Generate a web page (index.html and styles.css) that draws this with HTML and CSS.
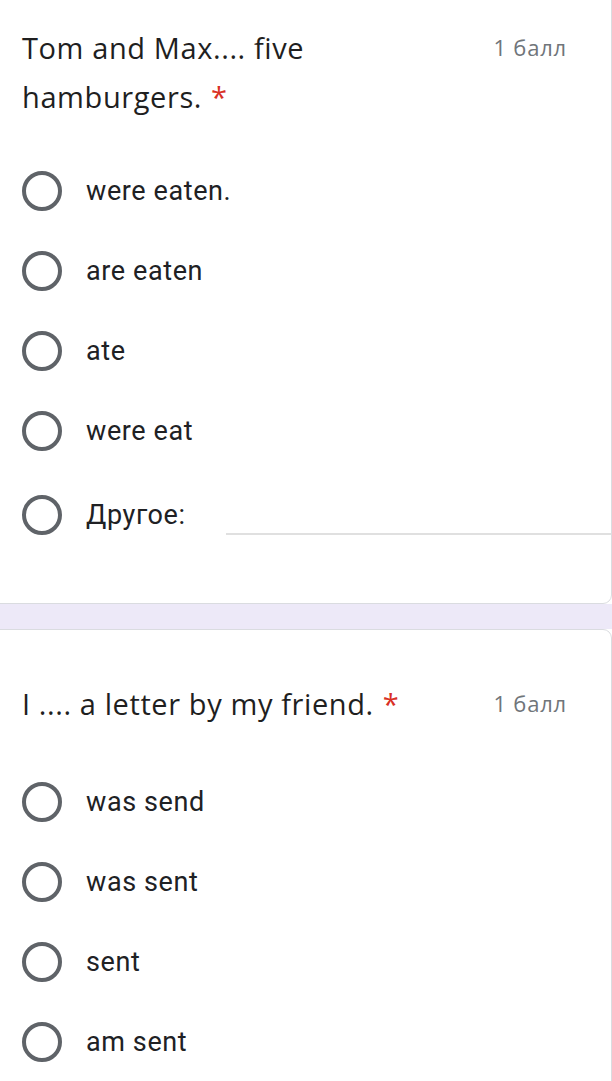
FILE: index.html
```html
<!DOCTYPE html>
<html lang="ru">
<head>
<meta charset="utf-8">
<link rel="stylesheet" href="styles.css">
</head>
<body>
<div class="page">
  <section class="card card-first">
    <div class="q-head">
      <div class="q-title">Tom and Max.... five hamburgers.<span class="req">*</span></div>
      <div class="q-points">1 балл</div>
    </div>
    <div class="options">
      <div class="opt"><span class="radio"></span><span class="label">were eaten.</span></div>
      <div class="opt"><span class="radio"></span><span class="label">are eaten</span></div>
      <div class="opt"><span class="radio"></span><span class="label">ate</span></div>
      <div class="opt"><span class="radio"></span><span class="label">were eat</span></div>
      <div class="opt opt-other"><span class="radio"></span><span class="label">Другое:</span><span class="other-input"></span></div>
    </div>
  </section>
  <div class="band"></div>
  <section class="card card-second">
    <div class="q-head">
      <div class="q-title">I .... a letter by my friend.<span class="req">*</span></div>
      <div class="q-points">1 балл</div>
    </div>
    <div class="options options-second">
      <div class="opt"><span class="radio"></span><span class="label">was send</span></div>
      <div class="opt"><span class="radio"></span><span class="label">was sent</span></div>
      <div class="opt"><span class="radio"></span><span class="label">sent</span></div>
      <div class="opt"><span class="radio"></span><span class="label">am sent</span></div>
    </div>
  </section>
</div>
</body>
</html>
```
FILE: styles.css
```css
html, body {
  margin: 0;
  padding: 0;
  background: #ffffff;
}
body {
  font-family: Roboto, "Noto Sans", "Liberation Sans", sans-serif;
  color: #202124;
  width: 612px;
  height: 1081px;
  overflow: hidden;
}
.page {
  display: flex;
  flex-direction: column;
}
.card {
  background: #ffffff;
  border: 1px solid #dadce0;
  margin-left: -20px;
  margin-right: 0;
  padding-left: 41px;
  padding-right: 44px;
}
.card-first {
  margin-top: -20px;
  padding-top: 42px;
  padding-bottom: 48px;
  border-radius: 0 0 9px 0;
}
.card-second {
  padding-top: 49px;
  padding-bottom: 40px;
  border-radius: 0 9px 0 0;
}
.band {
  height: 25px;
  background: #ede9f8;
}
.q-head {
  display: flex;
  justify-content: space-between;
  align-items: flex-start;
}
.q-title {
  font-family: "Open Sans", "Noto Sans", sans-serif;
  font-size: 29px;
  line-height: 49px;
  max-width: 340px;
  letter-spacing: 0.6px;
  color: #1f1f1f;
}
.card-second .q-title {
  max-width: none;
}
.req {
  color: #d93025;
  margin-left: 9px;
}
.q-points {
  font-family: "Open Sans", "Noto Sans", sans-serif;
  font-size: 22px;
  line-height: 49px;
  color: #70757a;
  letter-spacing: 0.8px;
  flex-shrink: 0;
}
.options {
  display: flex;
  flex-direction: column;
  margin-top: 30px;
}
.options-second {
  margin-top: 34px;
}
.opt {
  display: flex;
  align-items: center;
  height: 80px;
}
.opt-other {
  margin-top: 4px;
}
.radio {
  width: 32px;
  height: 32px;
  border: 4px solid #5f6368;
  border-radius: 50%;
  flex-shrink: 0;
}
.label {
  font-size: 27px;
  margin-left: 24px;
  letter-spacing: 0.6px;
}
.other-input {
  flex: 1;
  align-self: flex-end;
  height: 20px;
  margin-bottom: 20px;
  margin-left: 40px;
  margin-right: -44px;
  border-bottom: 2px solid #e0e0e0;
}
```
